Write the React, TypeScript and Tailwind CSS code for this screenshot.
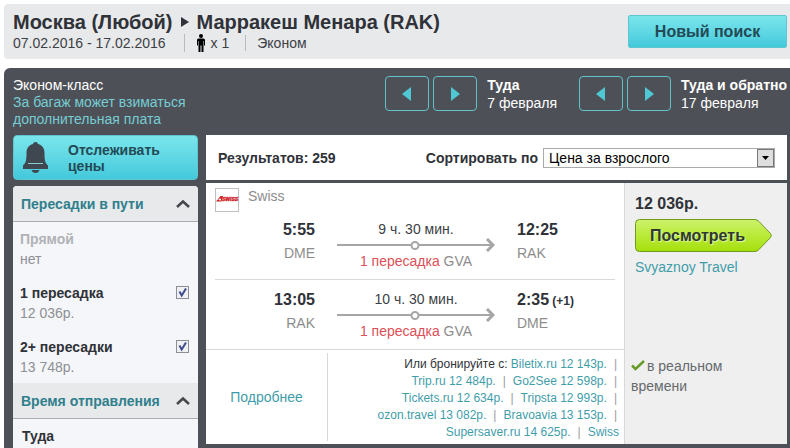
import * as React from "react"

const ArrowLeft = () => (
    <svg width="10" height="14" viewBox="0 0 10 14" aria-hidden="true">
        <path d="M9 0v14L0 7z" fill="#4fc8d3" />
    </svg>
)

const ArrowRight = () => (
    <svg width="10" height="14" viewBox="0 0 10 14" aria-hidden="true">
        <path d="M1 0v14l9-7z" fill="#4fc8d3" />
    </svg>
)

const Person = () => (
    <svg width="8" height="18" viewBox="0 0 8 18" aria-hidden="true">
        <circle cx="4" cy="2" r="2" fill="#000" />
        <path d="M1.500 4.500h5Q8 4.500 8 6v5.500H7V7h-.5v11h-2v-6.500h-1V18h-2V7H1v4.500H0V6q0-1.500 1.500-1.500z" fill="#000" />
    </svg>
)

const Bell = () => (
    <svg width="25" height="31" viewBox="0 0 25 31" aria-hidden="true">
        <path d="M12.500 0a2.500 2.500 0 0 1 2.500 2c4.500 1.200 6.500 4.500 6.500 9 0 7 .5 10 3.500 12.500V27H0v-3.500C3 21 3.500 18 3.500 11c0-4.500 2-7.800 6.500-9A2.500 2.500 0 0 1 12.500 0z" fill="#3f4750" />
        <path d="M5 21.500h15" stroke="#8ccbd3" strokeWidth="1" />
        <path d="M8.500 28h8q-1 3-4 3t-4-3z" fill="#3f4750" />
    </svg>
)

const ChevronUp = () => (
    <svg width="14" height="9" viewBox="0 0 14 9" aria-hidden="true">
        <path d="M1 8l6-5.500L13 8" fill="none" stroke="#45484d" strokeWidth="2.500" />
    </svg>
)

const SwissLogo = () => (
    <svg width="24" height="24" viewBox="0 0 24 24" className="shrink-0" role="img" aria-label="Swiss">
        <rect x=".5" y=".5" width="23" height="23" fill="#fff" stroke="#bfbfbf" />
        <path d="M1 13.500l4.500-5.500h2.500l-1.500 5.500z" fill="#cf2329" />
        <path d="M3.500 11.500h2.500M5 10.200v2.600" stroke="#fff" strokeWidth=".8" />
        <text x="7" y="13" fontSize="5" fontWeight="bold" fontStyle="italic" fontFamily="Liberation Sans, sans-serif" fill="#cf2329" stroke="#cf2329" strokeWidth=".4">SWISS</text>
    </svg>
)

const RouteLine = () => (
    <svg width="158" height="14" viewBox="0 0 158 14" className="block" aria-hidden="true">
        <path d="M0 7h155" stroke="#a6a6a6" strokeWidth="2" />
        <path d="M150 1l6 6-6 6" fill="none" stroke="#a6a6a6" strokeWidth="3" />
        <circle cx="78" cy="7.500" r="3.500" fill="#fff" stroke="#a6a6a6" strokeWidth="2" />
    </svg>
)

function DateShift({ title, date }: { title: string; date: string }) {
    return (
        <div className="flex gap-2.5">
            <div className="flex gap-1">
                <button aria-label={`${title}: раньше`} className="flex h-[35px] w-11 items-center justify-center rounded-sm border border-[#5fc3cc]">
                    <ArrowLeft />
                </button>
                <button aria-label={`${title}: позже`} className="flex h-[35px] w-11 items-center justify-center rounded-sm border border-[#5fc3cc]">
                    <ArrowRight />
                </button>
            </div>
            <div className="text-sm leading-[18px] whitespace-nowrap text-white">
                <div className="font-bold">{title}</div>
                <div>{date}</div>
            </div>
        </div>
    )
}

function FilterHeader({ title }: { title: string }) {
    return (
        <button className="flex h-9 w-full items-center justify-between border-b border-[#a9adb1] bg-[#e8e9ea] px-2 text-sm font-bold text-[#2f7f8d]">
            {title}
            <ChevronUp />
        </button>
    )
}

function StopOption({ label, price }: { label: string; price: string }) {
    return (
        <label className="flex items-start justify-between pr-[9px] pl-[7px]">
            <span className="text-sm leading-5">
                <span className="block font-bold text-[#2f3238]">{label}</span>
                <span className="block text-[#8d9094]">{price}</span>
            </span>
            <span className="relative mt-[3px] block size-[13px]">
                <input type="checkbox" defaultChecked className="peer block size-[13px] appearance-none border border-[#8b8e94] bg-[#eef0f3]" />
                <svg viewBox="0 0 13 13" className="pointer-events-none absolute inset-0 hidden size-[13px] peer-checked:block" aria-hidden="true">
                    <path d="M3.500 5.500l2.200 4L10 2.500" fill="none" stroke="#414c8c" strokeWidth="2" />
                </svg>
            </span>
        </label>
    )
}

interface LegProps {
    depart: string
    from: string
    duration: string
    arrive: string
    to: string
    nextDay?: boolean
}

function Leg({ depart, from, duration, arrive, to, nextDay }: LegProps) {
    return (
        <div className="grid grid-cols-[100px_158px_1fr] gap-x-[22px]">
            <div className="text-right">
                <div className="text-base leading-5 font-bold text-[#2f3238]">{depart}</div>
                <div className="mt-[3px] text-sm leading-5 text-[#8d8d8d]">{from}</div>
            </div>
            <div className="text-center text-sm leading-[18px]">
                <div className="text-[#3c3f45]">{duration}</div>
                <RouteLine />
                <div className="text-[#8d8d8d]">
                    <span className="text-[#db5058]">1 пересадка</span> GVA
                </div>
            </div>
            <div>
                <div className="text-base leading-5 font-bold text-[#2f3238]">
                    {arrive}
                    {nextDay && <span className="text-xs"> (+1)</span>}
                </div>
                <div className="mt-[3px] text-sm leading-5 text-[#8d8d8d]">{to}</div>
            </div>
        </div>
    )
}

const offers = [
    ["Biletix.ru 12 143р."],
    ["Trip.ru 12 484р.", "Go2See 12 598р."],
    ["Tickets.ru 12 634р.", "Tripsta 12 993р."],
    ["ozon.travel 13 082р.", "Bravoavia 13 153р."],
    ["Supersaver.ru 14 625р.", "Swiss"],
]

export default function App() {
    return (
        <div className="bg-white pt-1 pl-1 font-['Liberation_Sans',Arial,sans-serif]">
            <header className="flex h-[55px] items-start justify-between rounded-l-sm bg-[#e8e9ea] pr-[3px] pl-[9px] text-[#2f3238]">
                <div className="pt-1.5">
                    <h1 className="flex items-center gap-2 text-xl leading-6 font-bold whitespace-nowrap">
                        Москва (Любой)
                        <svg width="8" height="10" viewBox="0 0 8 10" aria-hidden="true">
                            <path d="M0 0v10l8-5z" fill="#2f3238" />
                        </svg>
                        Марракеш Менара (RAK)
                    </h1>
                    <div className="flex items-center text-sm leading-4 text-[#3c3f45]">
                        <span>07.02.2016 - 17.02.2016</span>
                        <span className="ml-[18px] flex items-center gap-1.5 border-l border-[#b9bcbf] pl-3">
                            <Person /> x 1
                        </span>
                        <span className="ml-4 border-l border-[#b9bcbf] pl-[11px]">Эконом</span>
                    </div>
                </div>
                <button className="mt-[11px] h-[33px] w-[159px] rounded-xs border border-[#5fc6d0] bg-linear-to-b from-[#7ae6ec] to-[#42c9db] text-base font-bold text-[#234a55]">
                    Новый поиск
                </button>
            </header>

            <main className="mt-[9px] rounded-tl-md bg-[#4e5057] pl-[9px]">
                <div className="flex h-[67px] items-start justify-between pt-2 pr-[3px]">
                    <div className="pt-px text-sm leading-[17px] text-[#76cdd4]">
                        <p className="text-white">Эконом-класс</p>
                        <p>За багаж может взиматься<br />дополнительная плата</p>
                    </div>
                    <div className="flex gap-[22px]">
                        <DateShift title="Туда" date="7 февраля" />
                        <DateShift title="Туда и обратно" date="17 февраля" />
                    </div>
                </div>

                <div className="flex items-start gap-2 pr-[3px]">
                    <aside className="w-[185px] shrink-0">
                        <button className="flex h-[45px] w-full items-center gap-5 rounded-sm border border-[#5fc6d0] bg-linear-to-b from-[#7ae6ec] to-[#42c9db] pl-[9px] text-left text-sm leading-4 font-bold text-[#234a55]">
                            <Bell />
                            <span>Отслеживать<br />цены</span>
                        </button>
                        <div className="mt-1.5 overflow-hidden rounded-t-sm bg-[#f5f6f9]">
                            <FilterHeader title="Пересадки в пути" />
                            <div className="flex flex-col gap-3.5 pt-[7px] pb-1.5">
                                <div className="pl-[7px] text-sm leading-5">
                                    <div className="font-bold text-[#b0b2b5]">Прямой</div>
                                    <div className="text-[#8d9094]">нет</div>
                                </div>
                                <StopOption label="1 пересадка" price="12 036р." />
                                <StopOption label="2+ пересадки" price="13 748р." />
                            </div>
                            <FilterHeader title="Время отправления" />
                            <div className="pt-[7px] pb-0.5 pl-[9px] text-sm leading-5 font-bold text-[#2f3238]">Туда</div>
                        </div>
                    </aside>

                    <section className="min-w-0 flex-1">
                        <div className="flex h-[45px] items-center justify-between bg-white px-3 text-sm text-[#2f3238]">
                            <span className="font-bold">Результатов: 259</span>
                            <div className="flex items-center gap-[5px]">
                                <label htmlFor="sort" className="font-bold">Сортировать по</label>
                                <div className="relative">
                                    <select id="sort" className="block h-5 w-[232px] appearance-none border border-[#aaa] bg-white pl-[5px] text-sm leading-[18px] text-black">
                                        <option>Цена за взрослого</option>
                                    </select>
                                    <span className="pointer-events-none absolute top-px right-px flex h-[18px] w-[17px] items-center justify-center border border-[#777] bg-[#dedede]">
                                        <svg width="7" height="4" viewBox="0 0 7 4" aria-hidden="true">
                                            <path d="M0 0h7L3.500 4z" fill="#000" />
                                        </svg>
                                    </span>
                                </div>
                            </div>
                        </div>

                        <article className="mt-[3px] flex bg-white">
                            <div className="min-w-0 flex-1">
                                <div className="px-[9px] pt-[5px]">
                                    <div className="flex gap-[9px] text-sm leading-4 text-[#8d8d8d]">
                                        <SwissLogo /> Swiss
                                    </div>
                                    <div className="h-[68px] border-b border-[#d9d9d9] pt-2">
                                        <Leg depart="5:55" from="DME" duration="9 ч. 30 мин." arrive="12:25" to="RAK" />
                                    </div>
                                    <div className="h-[69px] pt-2.5">
                                        <Leg depart="13:05" from="RAK" duration="10 ч. 30 мин." arrive="2:35" to="DME" nextDay />
                                    </div>
                                </div>
                                <div className="flex h-[95px] border-t border-[#d9d9d9] py-[3px]">
                                    <div className="flex w-[122px] items-center justify-center border-r border-[#d9d9d9]">
                                        <a href="#details" className="text-sm text-[#3f9daa]">Подробнее</a>
                                    </div>
                                    <div className="flex-1 pt-[3px] pr-[5px] text-right text-xs leading-[17px] whitespace-nowrap text-[#9a9da1]">
                                        {offers.map((row, i) => (
                                            <div key={i}>
                                                {i === 0 && <span className="text-[#2f3238]">Или бронируйте с: </span>}
                                                {row.map((offer, j) => (
                                                    <React.Fragment key={offer}>
                                                        {j > 0 && <span className="px-[7px]">|</span>}
                                                        <a href="#offer" className="text-[#3f9daa]">{offer}</a>
                                                    </React.Fragment>
                                                ))}
                                                {i < offers.length - 1 && <span className="pr-0.5 pl-[7px]">|</span>}
                                            </div>
                                        ))}
                                    </div>
                                </div>
                            </div>
                            <div className="w-[163px] shrink-0 border-l border-[#d9d9d9] bg-[#efefef] pt-[11px]">
                                <div className="pl-2.5">
                                    <div className="text-base leading-5 font-bold text-[#2f3238]">12 036р.</div>
                                    <button className="relative mt-[5px] block h-[33px] w-[137px] pr-3 text-base font-bold text-[#2f3a2a]">
                                        <svg viewBox="0 0 137 33" className="absolute inset-0 size-full" aria-hidden="true">
                                            <defs>
                                                <linearGradient id="lime" x1="0" y1="0" x2="0" y2="1">
                                                    <stop offset="0" stopColor="#cdf26d" />
                                                    <stop offset=".5" stopColor="#b9ea38" />
                                                    <stop offset="1" stopColor="#a5df0c" />
                                                </linearGradient>
                                            </defs>
                                            <path d="M4.500.5H120q2 0 4 2l11.500 12q1.500 2 0 4L124 30.500q-2 2-4 2H4.500q-4 0-4-4v-24q0-4 4-4z" fill="url(#lime)" stroke="#6f9a1d" />
                                        </svg>
                                        <span className="relative text-shadow-[1px_1px_1px_#e6f7b5]">Посмотреть</span>
                                    </button>
                                    <a href="#agency" className="mt-[5px] block text-sm leading-5 text-[#3f9daa]">Svyaznoy Travel</a>
                                </div>
                                <div className="mt-[79px] pl-1.5 text-sm leading-5 text-[#66696e]">
                                    <svg width="14" height="11" viewBox="0 0 14 11" className="mr-0.5 inline-block align-baseline" aria-hidden="true">
                                        <path d="M1 5.500l3.500 3.500L13 1" fill="none" stroke="#669b2b" strokeWidth="2.500" />
                                    </svg>
                                    в реальном<br />времени
                                </div>
                            </div>
                        </article>
                    </section>
                </div>
            </main>
        </div>
    )
}
